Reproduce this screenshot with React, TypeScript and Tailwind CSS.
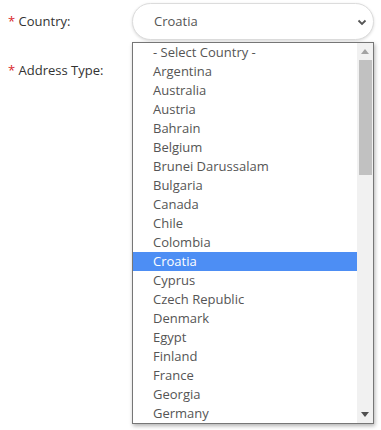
const countries = [
  "- Select Country -",
  "Argentina",
  "Australia",
  "Austria",
  "Bahrain",
  "Belgium",
  "Brunei Darussalam",
  "Bulgaria",
  "Canada",
  "Chile",
  "Colombia",
  "Croatia",
  "Cyprus",
  "Czech Republic",
  "Denmark",
  "Egypt",
  "Finland",
  "France",
  "Georgia",
  "Germany",
];

export default function App() {
  const selected = "Croatia";
  return (
    <div className="w-[381px] h-[430px] bg-white font-['Open_Sans',sans-serif] text-[13px] text-[#333]">
      <div className="flex flex-col pt-[3px]">
        <div className="flex items-center h-[37px]">
          <label className="w-[132px] pl-[8px]">
            <span className="text-[#d9262a]">*</span> Country:
          </label>
          <div className="relative">
            <div className="w-[242px] h-[37px] rounded-full border border-[#dcdcdc] bg-white shadow-[0_1px_3px_rgba(0,0,0,0.15)] flex items-center justify-between pl-[21px] pr-[6px] text-[#555]">
              <span>{selected}</span>
              <svg width="10" height="10" viewBox="0 0 10 10">
                <path d="M1.5 3.5 L5 7 L8.5 3.5" fill="none" stroke="#555" strokeWidth="1.8" />
              </svg>
            </div>
            <div className="absolute left-0 top-[39px] w-[242px] h-[382px] border border-[#767676] bg-white shadow-[1px_2px_4px_rgba(0,0,0,0.3)] flex z-10">
              <ul className="flex-1">
                {countries.map((c) => (
                  <li
                    key={c}
                    className={
                      c === selected
                        ? "h-[19px] leading-[19px] pl-[20px] bg-[#4d8ef4] text-white"
                        : "h-[19px] leading-[19px] pl-[20px] text-[#555]"
                    }
                  >
                    {c}
                  </li>
                ))}
              </ul>
              <div className="w-[16px] bg-[#f1f1f1] flex flex-col items-center">
                <div className="h-[17px] flex items-center justify-center">
                  <svg width="8" height="5" viewBox="0 0 8 5">
                    <path d="M0 5 L4 0 L8 5 Z" fill="#a3a3a3" />
                  </svg>
                </div>
                <div className="w-[13px] h-[115px] bg-[#c1c1c1]" />
                <div className="flex-1" />
                <div className="h-[17px] flex items-center justify-center">
                  <svg width="8" height="5" viewBox="0 0 8 5">
                    <path d="M0 0 L8 0 L4 5 Z" fill="#505050" />
                  </svg>
                </div>
              </div>
            </div>
          </div>
        </div>
        <div className="flex items-center h-[25px] mt-[18px]">
          <label className="w-[132px] pl-[8px]">
            <span className="text-[#d9262a]">*</span> Address Type:
          </label>
        </div>
      </div>
    </div>
  );
}
